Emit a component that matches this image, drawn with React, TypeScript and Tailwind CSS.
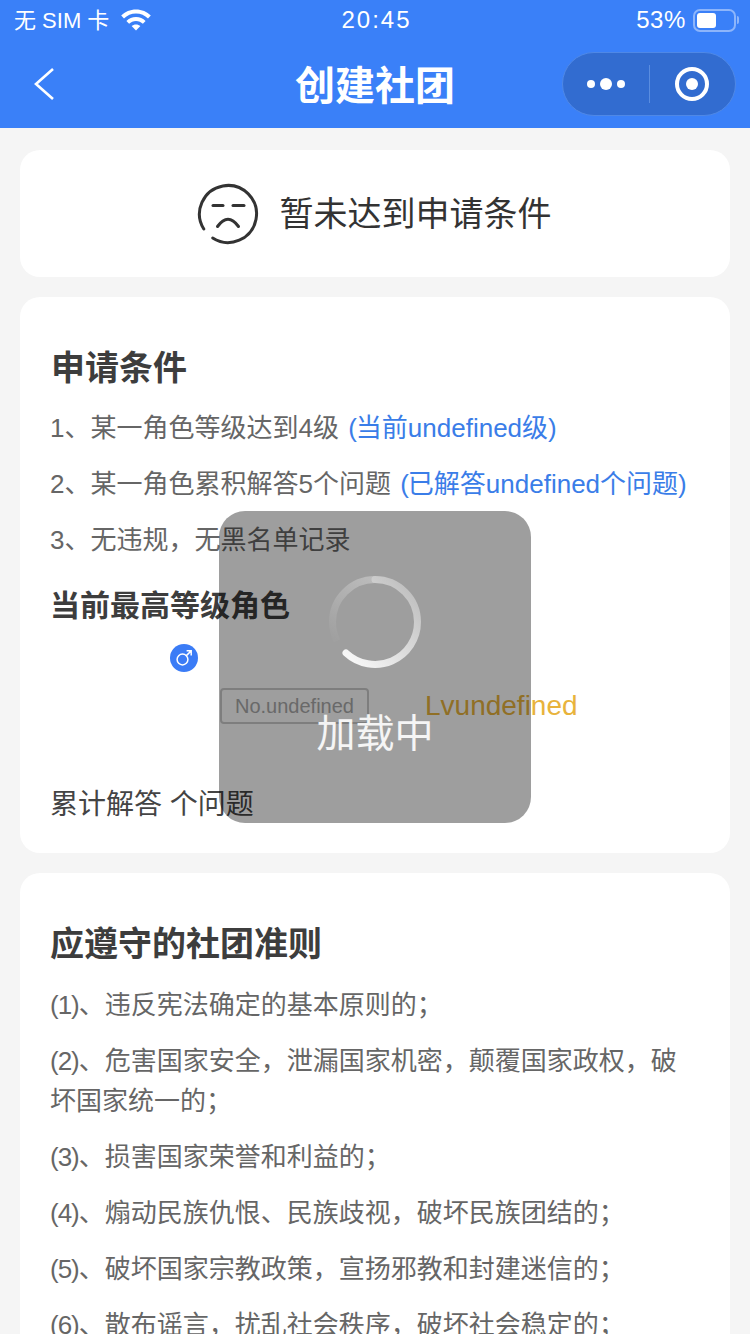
const font = { fontFamily: '"Liberation Sans", "Noto Sans CJK SC", sans-serif' };

function SadFace() {
  return (
    <svg width="62" height="62" viewBox="0 0 62 62" fill="none" stroke="#333" strokeWidth="3" strokeLinecap="round">
      <path d="M6.8 46 A28.5 28.5 0 1 1 15.7 55" />
      <path d="M16 22.5 H26" />
      <path d="M36 22.5 H47" />
      <path d="M20.5 43.5 Q31 29 41.5 43.5" />
    </svg>
  );
}

function Wifi() {
  return (
    <svg width="30" height="22" viewBox="0 0 30 22" fill="#fff">
      <path d="M15 0.5 C20.8 0.5 26 2.8 29.8 6.5 L27 9.4 C23.9 6.3 19.7 4.4 15 4.4 C10.3 4.4 6.1 6.3 3 9.4 L0.2 6.5 C4 2.8 9.2 0.5 15 0.5 Z" />
      <path d="M15 8 C18.7 8 22.1 9.5 24.6 11.9 L21.9 14.7 C20.1 13 17.7 11.9 15 11.9 C12.3 11.9 9.9 13 8.1 14.7 L5.4 11.9 C7.9 9.5 11.3 8 15 8 Z" />
      <path d="M15 15.4 C16.7 15.4 18.2 16 19.4 17.1 L15 21.6 L10.6 17.1 C11.8 16 13.3 15.4 15 15.4 Z" />
    </svg>
  );
}

function Male() {
  return (
    <svg width="28" height="28" viewBox="0 0 28 28" fill="none">
      <circle cx="14" cy="14" r="14" fill="#3b7cf6" />
      <circle cx="12.5" cy="15.5" r="5.4" stroke="#fff" strokeWidth="1.5" />
      <path d="M16.4 11.6 L21 7 M16.6 6.8 H21.2 V11.4" stroke="#fff" strokeWidth="1.5" />
    </svg>
  );
}

function Spinner() {
  return (
    <svg width="92" height="92" viewBox="0 0 92 92" fill="none" strokeWidth="7">
      <defs>
        <linearGradient id="sp1" gradientUnits="userSpaceOnUse" x1="17" y1="77" x2="88" y2="10">
          <stop offset="0" stopColor="#f6f6f6" />
          <stop offset="1" stopColor="#bcbcbc" />
        </linearGradient>
        <linearGradient id="sp2" gradientUnits="userSpaceOnUse" x1="46" y1="3.5" x2="5" y2="62">
          <stop offset="0" stopColor="#bcbcbc" />
          <stop offset="1" stopColor="#a0a0a0" />
        </linearGradient>
      </defs>
      <path d="M46 3.5 A42.5 42.5 0 0 0 3.5 46 A42.5 42.5 0 0 0 8 65" stroke="url(#sp2)" />
      <path d="M17 77 A42.5 42.5 0 0 0 88.5 46 A42.5 42.5 0 0 0 46 3.5" stroke="url(#sp1)" strokeLinecap="round" />
    </svg>
  );
}

const rules: [string, string][] = [
  ['(1)', '、违反宪法确定的基本原则的；'],
  ['(2)', '、危害国家安全，泄漏国家机密，颠覆国家政权，破坏国家统一的；'],
  ['(3)', '、损害国家荣誉和利益的；'],
  ['(4)', '、煽动民族仇恨、民族歧视，破坏民族团结的；'],
  ['(5)', '、破坏国家宗教政策，宣扬邪教和封建迷信的；'],
  ['(6)', '、散布谣言，扰乱社会秩序，破坏社会稳定的；'],
];

export default function App() {
  return (
    <div style={font} className="relative h-[1334px] w-[750px] overflow-hidden bg-[#f5f5f5]">
      <header className="bg-[#3a80f8] text-white">
        <div className="flex h-10 items-center justify-between pl-[14px] pr-[11px]">
          <div className="flex w-[300px] items-center gap-3 text-[22px]">
            <span>无 SIM 卡</span>
            <Wifi />
          </div>
          <span className="text-[24px] font-medium tracking-[2px]">20:45</span>
          <div className="flex w-[300px] items-center justify-end gap-[7px] text-[24px]">
            <span className="tracking-[0.6px]">53%</span>
            <div className="flex items-center gap-[1px]">
              <div className="flex h-[23px] w-[43px] items-center rounded-[7px] border-2 border-[#8db5fb] p-[2px]">
                <div className="h-[15px] w-[19px] rounded-[3px] bg-white" />
              </div>
              <div className="h-[8px] w-[2px] rounded-r bg-[#8db5fb]" />
            </div>
          </div>
        </div>
        <div className="relative flex h-[88px] items-center justify-center pt-[3px]">
          <svg className="absolute left-[32px] top-[26px]" width="24" height="36" viewBox="0 0 24 36" fill="none" stroke="#fff" strokeWidth="2.6">
            <path d="M21 3 L4 18 L21 33" strokeLinejoin="miter" />
          </svg>
          <span className="text-[40px] font-semibold leading-none">创建社团</span>
          <div className="absolute right-[14px] top-[12px] flex h-[64px] w-[174px] items-center rounded-full border border-[#4f88e6] bg-[#326cd0]">
            <div className="flex w-[86px] items-center justify-center gap-[5px]">
              <span className="h-[8px] w-[8px] rounded-full bg-white" />
              <span className="h-[12px] w-[12px] rounded-full bg-white" />
              <span className="h-[8px] w-[8px] rounded-full bg-white" />
            </div>
            <div className="h-[38px] w-px bg-[#5a8de0]" />
            <div className="flex flex-1 items-center justify-center pr-[1px]">
              <div className="flex h-[34px] w-[34px] items-center justify-center rounded-full border-[4px] border-white">
                <span className="h-[12px] w-[12px] rounded-full bg-white" />
              </div>
            </div>
          </div>
        </div>
      </header>

      <main className="flex flex-col gap-5 px-5 pt-[22px]">
        <section className="flex h-[127px] items-center justify-center gap-[21px] rounded-[20px] bg-white pr-[2px]">
          <SadFace />
          <span className="text-[34px] leading-none text-[#333]">暂未达到申请条件</span>
        </section>

        <section className="h-[556px] rounded-[20px] bg-white px-[30px] pt-[51px]">
          <h2 className="pl-[1px] text-[34px] font-semibold leading-[40px] text-[#3d3d3d]">申请条件</h2>
          <div className="mt-[22px] flex flex-col gap-[20px] text-[26px] leading-[36px] text-[#666]">
            <p>1、某一角色等级达到4级 <span className="ml-[2px] text-[#3a7de8]"><span className="tracking-[-1px]">(</span>当前undefined级<span className="tracking-[-1px]">)</span></span></p>
            <p>2、某一角色累积解答5个问题 <span className="ml-[2px] text-[#3a7de8]"><span className="tracking-[-1px]">(</span>已解答undefined个问题<span className="tracking-[-1px]">)</span></span></p>
            <p>3、无违规，无黑名单记录</p>
          </div>
          <h3 className="mt-[28px] text-[30px] font-semibold leading-[40px] text-[#3d3d3d]">当前最高等级角色</h3>
          <div className="relative h-[160px]">
            <div className="absolute left-[120px] top-[18px]"><Male /></div>
            <div className="absolute left-[170px] top-[59px] flex items-center gap-[56px]">
              <span className="flex h-[36px] items-center rounded-[4px] border-2 border-[#ccc] px-[13px] text-[20px] text-[#aaa]">No.undefined</span>
              <span className="text-[28px] text-[#e8b33c]">Lvundefined</span>
            </div>
          </div>
          <p className="mt-[1px] text-[28px] leading-[36px] text-[#444]">累计解答 个问题</p>
        </section>

        <section className="rounded-[20px] bg-white px-[30px] pb-[100px] pt-[51px]">
          <h2 className="text-[34px] font-semibold leading-[40px] text-[#3d3d3d]">应遵守的社团准则</h2>
          <div className="mt-[21px] flex flex-col gap-[16px] text-[26px] leading-[40px] text-[#666]">
            {rules.map(([n, r]) => <p key={n}><span className="tracking-[-1px]">{n}</span>{r}</p>)}
          </div>
        </section>
      </main>

      <div className="absolute left-[219px] top-[511px] flex h-[312px] w-[312px] flex-col items-center rounded-[26px] bg-black/[0.38] pt-[65px]">
        <Spinner />
        <span className="mt-[41px] text-[39px] leading-[50px] text-white/90">加载中</span>
      </div>
    </div>
  );
}
